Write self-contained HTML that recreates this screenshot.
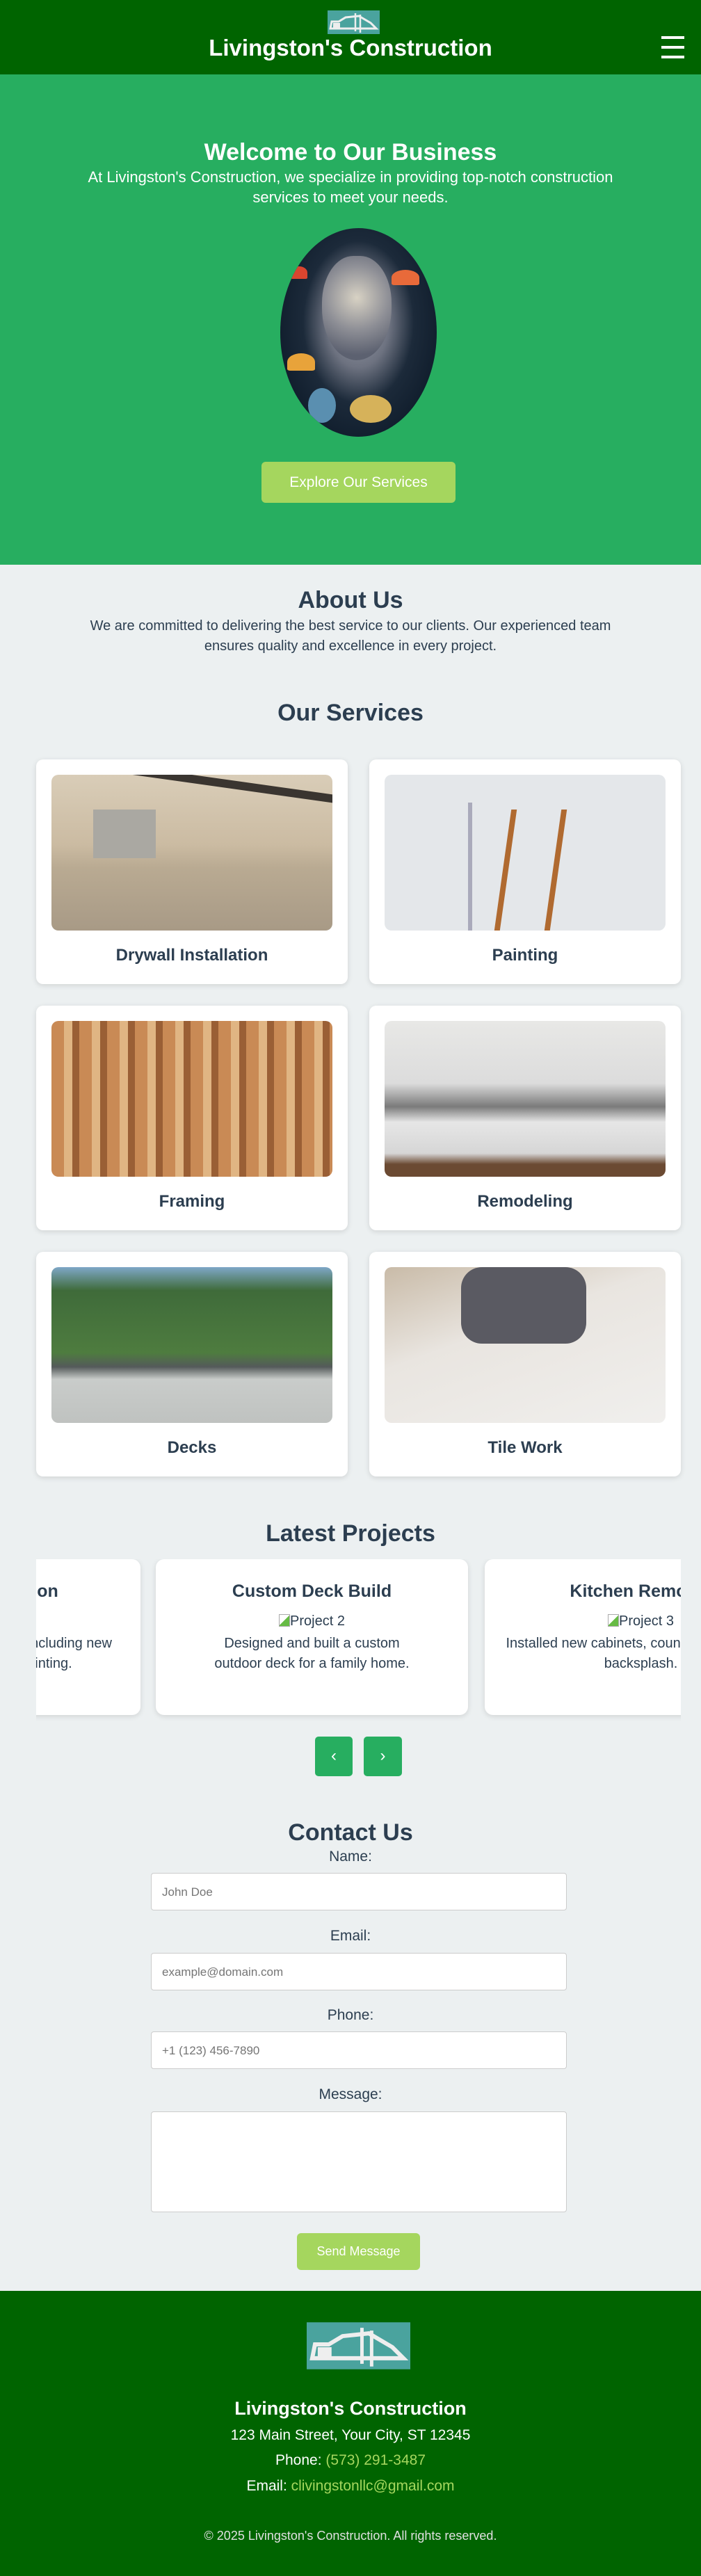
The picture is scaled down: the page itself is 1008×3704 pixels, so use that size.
<!DOCTYPE html>
<html><head><meta charset="utf-8"><style>
*{box-sizing:border-box;margin:0;padding:0}
body{width:1008px;height:3704px;background:#ecf0f1;font-family:"Liberation Sans",Arial,sans-serif;color:#2c3e50;position:relative;overflow:hidden}
.a{position:absolute}
.c{text-align:center;left:0;width:1008px}
header{position:absolute;left:0;top:0;width:1008px;height:107px;background:#006400}
.hero{position:absolute;left:0;top:107px;width:1008px;height:705px;background:#27ae60}
.card{position:absolute;background:#fff;border-radius:10px;box-shadow:0 2px 8px rgba(0,0,0,.12);width:448px;height:323px}
.card .img{position:absolute;left:22px;top:22px;width:404px;height:224px;border-radius:10px;overflow:hidden}
.card .lbl{position:absolute;left:0;width:100%;top:268px;text-align:center;font-weight:bold;font-size:24px;color:#2c3e50}
.pc{position:absolute;top:0;width:449px;height:224px;background:#fff;border-radius:12px;box-shadow:0 2px 8px rgba(0,0,0,.12);text-align:center}
.pc h3{position:absolute;top:32px;left:0;width:100%;font-size:25px}
.pc .alt{position:absolute;top:78px;left:0;width:100%;font-size:20px;color:#2c3e50}
.pc p{position:absolute;top:107px;left:75px;width:299px;font-size:20px;line-height:29px;color:#2c3e50}
.broken{display:inline-block;width:16px;height:18px;border:1px solid #aaa;background:linear-gradient(135deg,#fff 50%,#6b4 50%);vertical-align:-2px}
.lab{font-size:21px;color:#2c3e50}
.inp{position:absolute;left:217px;width:598px;height:54px;background:#fff;border:1px solid #ccc;border-radius:4px;font-size:17px;color:#757575;padding:17px 15px}
</style></head><body>
<header>
<svg class="a" style="left:471px;top:15px" width="75" height="34" viewBox="0 0 75 34"><rect width="75" height="34" fill="#4aa39e"/><path d="M4 26 L6 16 L16 16 L26 10 L45 8 L62 18 L70 26 Z" fill="none" stroke="#eee" stroke-width="3"/><path d="M8 18h10v8H8z" fill="#eee"/><path d="M40 4v26M47 6v26" stroke="#eee" stroke-width="2.5"/></svg>
<div class="a c" style="top:49px;font-size:33px;font-weight:bold;color:#fff;line-height:40px">Livingston's Construction</div>
<div class="a" style="left:951px;top:52px;width:33px;height:4px;background:#fff"></div>
<div class="a" style="left:951px;top:66px;width:33px;height:4px;background:#fff"></div>
<div class="a" style="left:951px;top:80px;width:33px;height:4px;background:#fff"></div>
</header>
<div class="hero">
<div class="a c" style="top:92px;font-size:34px;font-weight:bold;color:#fff;line-height:40px">Welcome to Our Business</div>
<div class="a" style="left:90px;width:828px;top:133px;text-align:center;font-size:22px;line-height:29px;color:#fff">At Livingston's Construction, we specialize in providing top-notch construction services to meet your needs.</div>
<div class="a" style="left:403px;top:221px;width:225px;height:300px;border-radius:50%;overflow:hidden;background:radial-gradient(ellipse at 50% 45%,#9aa0ac 0,#6d7280 28%,#1c2a3a 50%,#0e1b2a 80%)">
<div class="a" style="left:60px;top:40px;width:100px;height:150px;border-radius:45% 45% 50% 50%;background:radial-gradient(circle at 50% 40%,#d8d2c4 0,#8e8f96 45%,#5c6170 80%)"></div>
<div class="a" style="left:10px;top:180px;width:40px;height:25px;border-radius:50% 50% 10% 10%;background:#e8a33a"></div>
<div class="a" style="left:160px;top:60px;width:40px;height:22px;border-radius:50% 50% 10% 10%;background:#e86a3a"></div>
<div class="a" style="left:15px;top:55px;width:24px;height:18px;border-radius:50% 50% 10% 10%;background:#d9452f"></div>
<div class="a" style="left:100px;top:240px;width:60px;height:40px;border-radius:50%;background:#d6b25a"></div>
<div class="a" style="left:40px;top:230px;width:40px;height:50px;border-radius:50%;background:#5a8fb0"></div>
</div>
<div class="a" style="left:376px;top:557px;width:279px;height:59px;border-radius:6px;background:#a5d65e;color:#fff;font-size:21px;text-align:center;line-height:59px">Explore Our Services</div>
</div>

<div class="a c" style="top:843px;font-size:34px;font-weight:bold;line-height:40px">About Us</div>
<div class="a" style="left:100px;width:808px;top:886px;text-align:center;font-size:20px;line-height:29px">We are committed to delivering the best service to our clients. Our experienced team ensures quality and excellence in every project.</div>
<div class="a c" style="top:1005px;font-size:34px;font-weight:bold;line-height:40px">Our Services</div>

<div class="card" style="left:52px;top:1092px"><div class="img" style="background:linear-gradient(180deg,#d9cdb8 0,#cbbba2 45%,#b9aa92 60%,#a89a86 100%)"><div class="a" style="left:60px;top:50px;width:90px;height:70px;background:#aaa8a2"></div><div class="a" style="left:0;top:0;width:404px;height:12px;background:#3a3530;transform:skewY(8deg)"></div></div><div class="lbl">Drywall Installation</div></div>
<div class="card" style="left:531px;top:1092px"><div class="img" style="background:#e4e7ea"><div class="a" style="left:170px;top:50px;width:80px;height:174px;border-left:8px solid #b06a30;border-right:8px solid #b06a30;transform:skewX(-8deg)"></div><div class="a" style="left:120px;top:40px;width:6px;height:184px;background:#aab"></div></div><div class="lbl">Painting</div></div>
<div class="card" style="left:52px;top:1446px"><div class="img" style="background:repeating-linear-gradient(90deg,#c98a55 0,#c98a55 18px,#e0b583 18px,#e0b583 30px,#9a5f35 30px,#9a5f35 40px)"></div><div class="lbl">Framing</div></div>
<div class="card" style="left:531px;top:1446px"><div class="img" style="background:linear-gradient(180deg,#e8e8e6 0,#dcdcdc 40%,#7a7a7a 55%,#e6e6e6 65%,#d6d6d6 85%,#6b4a32 92%)"></div><div class="lbl">Remodeling</div></div>
<div class="card" style="left:52px;top:1800px"><div class="img" style="background:linear-gradient(180deg,#7ea7c7 0,#3f6b3a 15%,#4e7c3f 55%,#545a5a 64%,#c9ccca 72%,#bfc2c0 100%)"></div><div class="lbl">Decks</div></div>
<div class="card" style="left:531px;top:1800px"><div class="img" style="background:linear-gradient(160deg,#c9bba8 0,#e9e5e0 40%,#f0efed 100%)"><div class="a" style="left:110px;top:0;width:180px;height:110px;background:#5a5a62;border-radius:30px"></div></div><div class="lbl">Tile Work</div></div>

<div class="a c" style="top:2185px;font-size:34px;font-weight:bold;line-height:40px">Latest Projects</div>
<div class="a" style="left:52px;top:2242px;width:927px;height:240px;overflow:hidden">
<div class="pc" style="left:-299px"><h3>Home Renovation</h3><div class="alt"><span class="broken"></span>Project 1</div><p style="left:40px;width:369px">Complete home renovation including new flooring and interior painting.</p></div>
<div class="pc" style="left:172px"><h3>Custom Deck Build</h3><div class="alt"><span class="broken"></span>Project 2</div><p>Designed and built a custom outdoor deck for a family home.</p></div>
<div class="pc" style="left:645px"><h3>Kitchen Remodel</h3><div class="alt"><span class="broken"></span>Project 3</div><p style="left:25px;width:399px">Installed new cabinets, countertops, and tile backsplash.</p></div>
</div>
<div class="a" style="left:453px;top:2497px;width:54px;height:57px;background:#27ae60;border-radius:5px;color:#fff;font-size:24px;text-align:center;line-height:55px">‹</div>
<div class="a" style="left:523px;top:2497px;width:55px;height:57px;background:#27ae60;border-radius:5px;color:#fff;font-size:24px;text-align:center;line-height:55px">›</div>

<div class="a c" style="top:2615px;font-size:34px;font-weight:bold;line-height:40px">Contact Us</div>
<div class="a c lab" style="top:2658px">Name:</div>
<div class="inp" style="top:2693px">John Doe</div>
<div class="a c lab" style="top:2772px">Email:</div>
<div class="inp" style="top:2808px">example@domain.com</div>
<div class="a c lab" style="top:2886px">Phone:</div>
<div class="inp" style="top:2921px">+1 (123) 456-7890</div>
<div class="a c lab" style="top:3000px">Message:</div>
<div class="inp" style="top:3036px;height:145px"></div>
<div class="a" style="left:427px;top:3211px;width:177px;height:53px;background:#a5d65e;border-radius:6px;color:#fff;font-size:18px;text-align:center;line-height:53px">Send Message</div>

<div class="a" style="left:0;top:3294px;width:1008px;height:410px;background:#006400">
<svg class="a" style="left:441px;top:45px" width="149" height="68" viewBox="0 0 75 34"><rect width="75" height="34" fill="#4aa39e"/><path d="M4 26 L6 16 L16 16 L26 10 L45 8 L62 18 L70 26 Z" fill="none" stroke="#eee" stroke-width="3"/><path d="M8 18h10v8H8z" fill="#eee"/><path d="M40 4v26M47 6v26" stroke="#eee" stroke-width="2.5"/></svg>
<div class="a c" style="top:154px;font-size:27px;font-weight:bold;color:#fff">Livingston's Construction</div>
<div class="a c" style="top:196px;font-size:21px;color:#fff">123 Main Street, Your City, ST 12345</div>
<div class="a c" style="top:232px;font-size:21px;color:#fff">Phone: <span style="color:#a5d65e">(573) 291-3487</span></div>
<div class="a c" style="top:269px;font-size:21px;color:#fff">Email: <span style="color:#a5d65e">clivingstonllc@gmail.com</span></div>
<div class="a c" style="top:342px;font-size:18px;color:#e0e0e0">© 2025 Livingston's Construction. All rights reserved.</div>
</div>
</body></html>
